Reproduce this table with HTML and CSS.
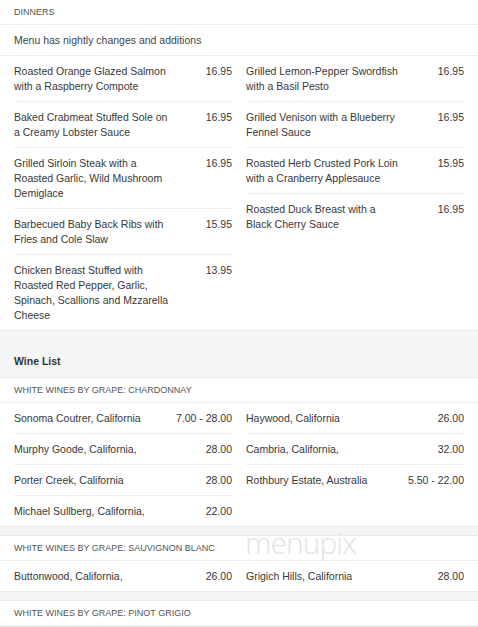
FILE: index.html
```html
<!DOCTYPE html>
<html lang="en">
<head>
<meta charset="utf-8">
<title>Dinners &amp; Wine List</title>
<link rel="stylesheet" href="styles.css">
</head>
<body>
<div class="page">
  <section class="panel">
    <div class="cat">Dinners</div>
    <div class="note">Menu has nightly changes and additions</div>
    <div class="cols">
      <ul class="col">
        <li class="item"><span class="name">Roasted Orange Glazed Salmon with a Raspberry Compote</span><span class="price">16.95</span></li>
        <li class="item"><span class="name">Baked Crabmeat Stuffed Sole on a Creamy Lobster Sauce</span><span class="price">16.95</span></li>
        <li class="item"><span class="name">Grilled Sirloin Steak with a Roasted Garlic, Wild Mushroom Demiglace</span><span class="price">16.95</span></li>
        <li class="item"><span class="name">Barbecued Baby Back Ribs with Fries and Cole Slaw</span><span class="price">15.95</span></li>
        <li class="item"><span class="name">Chicken Breast Stuffed with Roasted Red Pepper, Garlic, Spinach, Scallions and Mzzarella Cheese</span><span class="price">13.95</span></li>
      </ul>
      <ul class="col">
        <li class="item"><span class="name">Grilled Lemon-Pepper Swordfish with a Basil Pesto</span><span class="price">16.95</span></li>
        <li class="item"><span class="name">Grilled Venison with a Blueberry Fennel Sauce</span><span class="price">16.95</span></li>
        <li class="item"><span class="name">Roasted Herb Crusted Pork Loin with a Cranberry Applesauce</span><span class="price">15.95</span></li>
        <li class="item"><span class="name">Roasted Duck Breast with a Black Cherry Sauce</span><span class="price">16.95</span></li>
      </ul>
    </div>
  </section>

  <h2 class="section">Wine List</h2>

  <section class="panel">
    <div class="cat">White Wines by Grape: Chardonnay</div>
    <div class="cols">
      <ul class="col">
        <li class="item"><span class="name">Sonoma Coutrer, California</span><span class="price">7.00 - 28.00</span></li>
        <li class="item"><span class="name">Murphy Goode, California,</span><span class="price">28.00</span></li>
        <li class="item"><span class="name">Porter Creek, California</span><span class="price">28.00</span></li>
        <li class="item"><span class="name">Michael Sullberg, California,</span><span class="price">22.00</span></li>
      </ul>
      <ul class="col">
        <li class="item"><span class="name">Haywood, California</span><span class="price">26.00</span></li>
        <li class="item"><span class="name">Cambria, California,</span><span class="price">32.00</span></li>
        <li class="item"><span class="name">Rothbury Estate, Australia</span><span class="price">5.50 - 22.00</span></li>
      </ul>
    </div>
  </section>

  <section class="panel gap">
    <div class="cat">White Wines by Grape: Sauvignon Blanc</div>
    <div class="cols">
      <ul class="col">
        <li class="item"><span class="name">Buttonwood, California,</span><span class="price">26.00</span></li>
      </ul>
      <ul class="col">
        <li class="item"><span class="name">Grigich Hills, California</span><span class="price">28.00</span></li>
      </ul>
    </div>
  </section>

  <section class="panel gap">
    <div class="cat">White Wines by Grape: Pinot Grigio</div>
  </section>

  <div class="watermark">menupix</div>
</div>
</body>
</html>
```

FILE: styles.css
```css
* { box-sizing: border-box; }

html, body {
  margin: 0;
  padding: 0;
  background: #f4f5f7;
}

body {
  font-family: Arial, "Liberation Sans", Helvetica, sans-serif;
  font-size: 10.5px;
  line-height: 15px;
  color: #383838;
}

.page {
  position: relative;
  overflow: hidden;
}

.panel {
  background: #fff;
  border-bottom: 1px solid #e9eaec;
}

.panel.gap {
  margin-top: 8px;
  border-top: 1px solid #e9eaec;
}

.cat {
  font-size: 9px;
  line-height: 13px;
  text-transform: uppercase;
  color: #555;
  padding: 6px 14px 5px;
  border-bottom: 1px solid #eeeeee;
}

.note {
  padding: 7.5px 14px;
  color: #444;
  border-bottom: 1px solid #eeeeee;
}

.cols {
  display: grid;
  grid-template-columns: 1fr 1fr;
  column-gap: 14px;
  padding: 0 14px;
}

.col {
  list-style: none;
  margin: 0;
  padding: 0;
}

.item {
  display: flex;
  align-items: flex-start;
  padding: 7.5px 0;
  border-bottom: 1px solid #eeeeee;
}

.item:last-child {
  border-bottom: none;
}

.name {
  flex: 1;
  min-width: 0;
}

.price {
  width: 62px;
  flex: none;
  text-align: right;
}

.section {
  margin: 0;
  padding: 23px 14px 8px;
  font-size: 10.5px;
  line-height: 15px;
  font-weight: bold;
  color: #333;
  border-bottom: 1px solid #e9eaec;
}

.watermark {
  position: absolute;
  left: 245px;
  top: 528px;
  font-family: "Open Sans", "DejaVu Sans", sans-serif;
  font-weight: 300;
  font-size: 30px;
  line-height: 30px;
  color: #e4e4e4;
  letter-spacing: -1px;
  pointer-events: none;
}
```
